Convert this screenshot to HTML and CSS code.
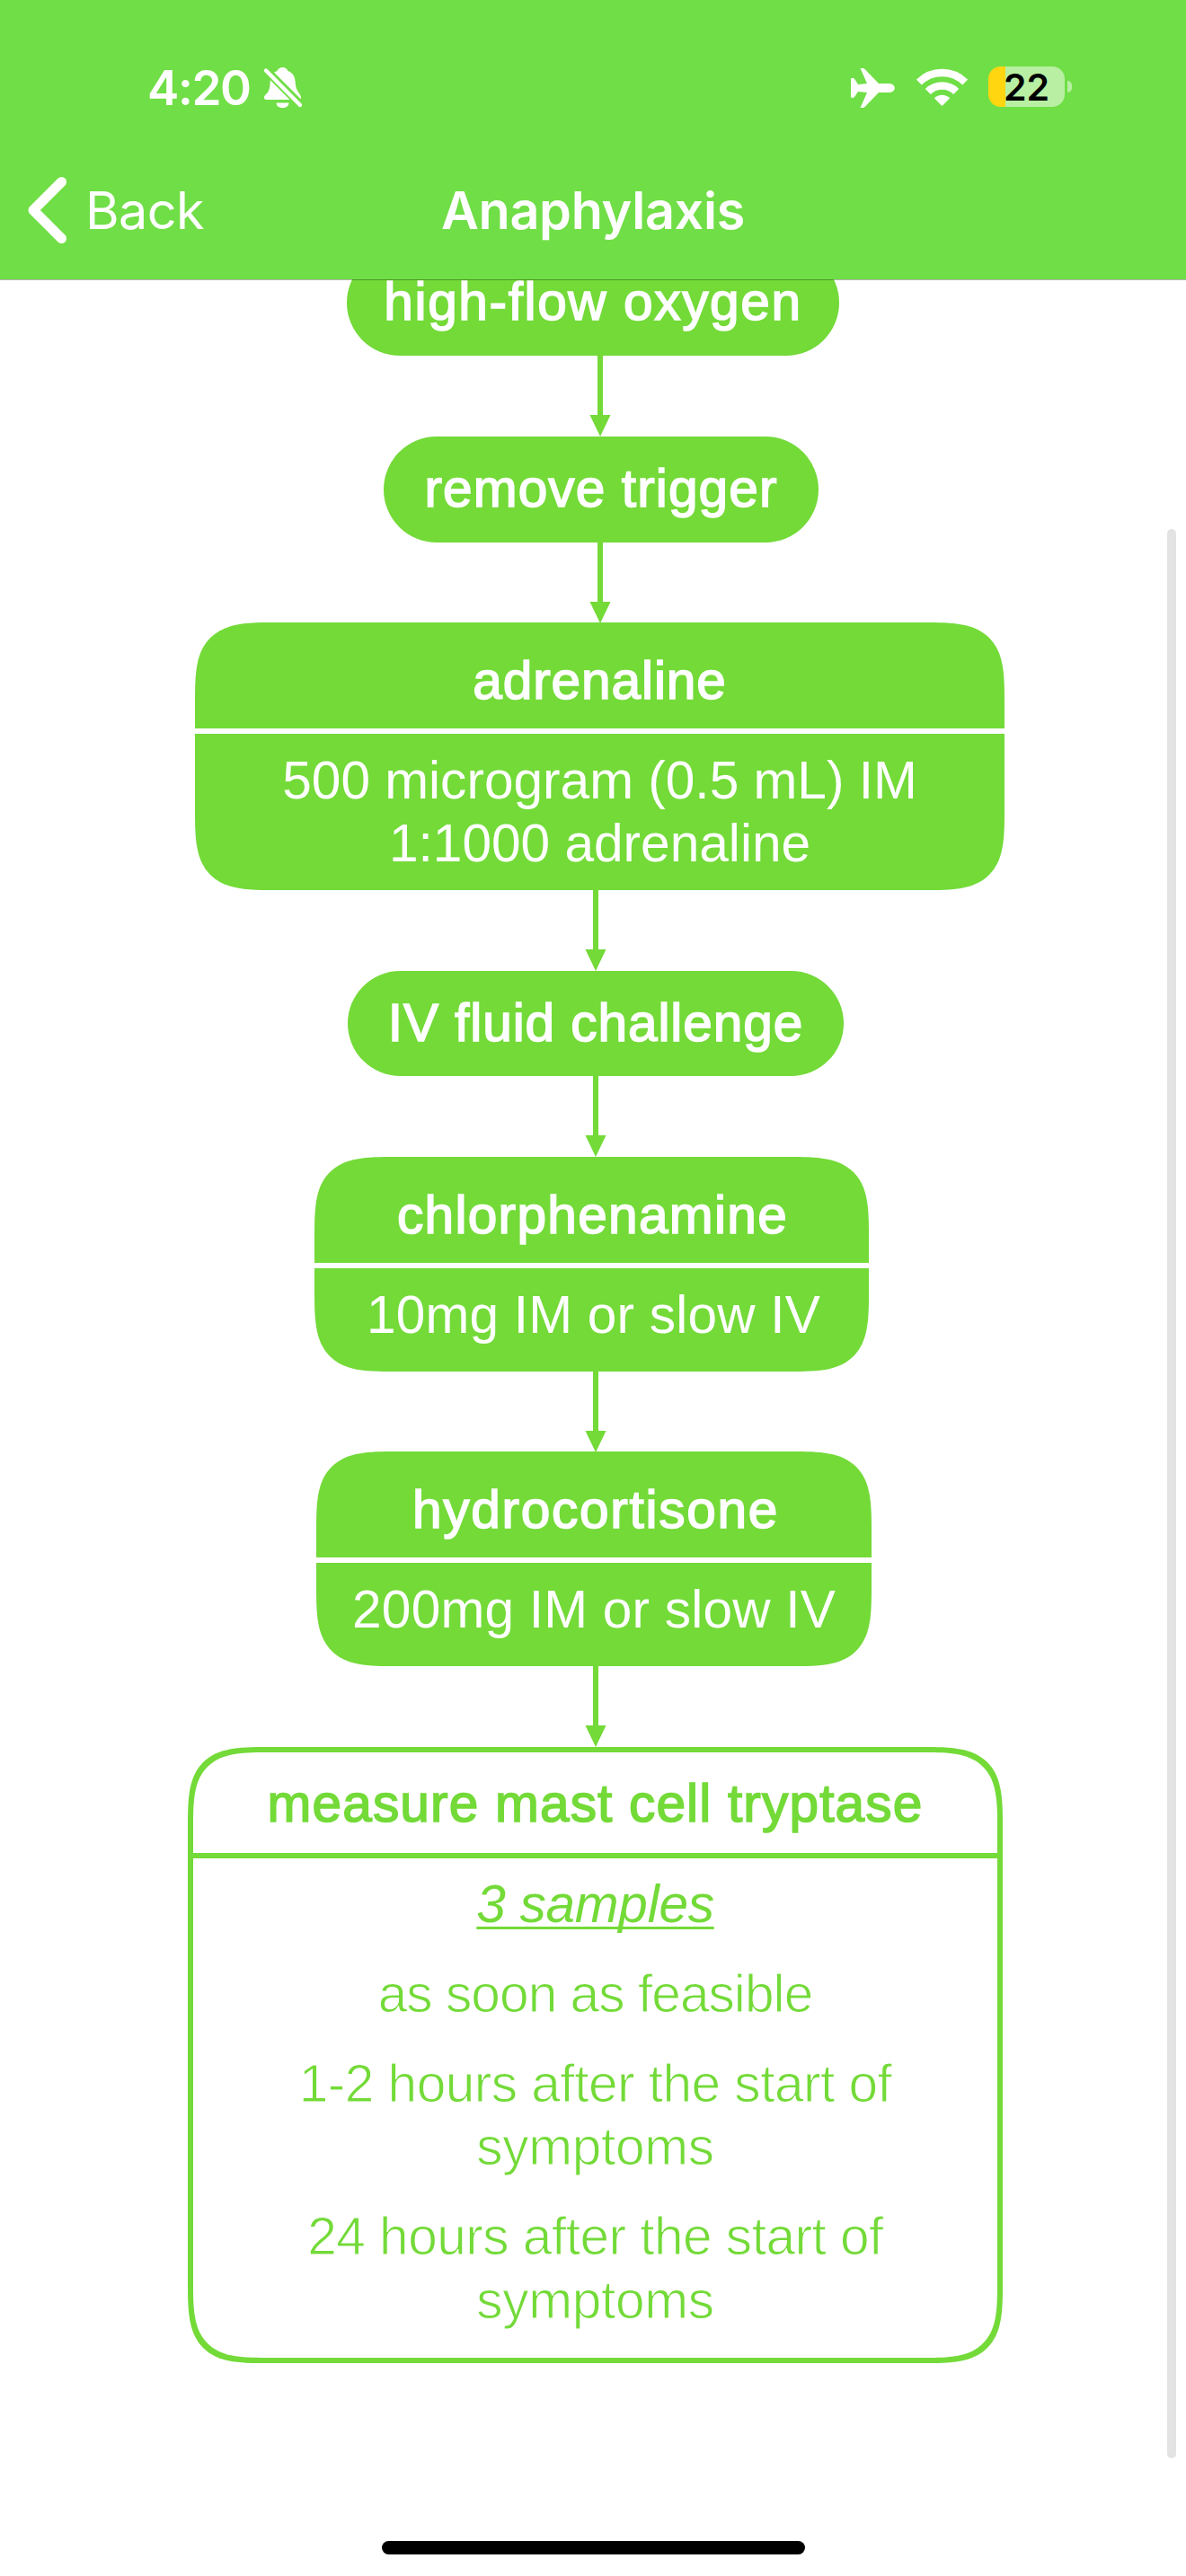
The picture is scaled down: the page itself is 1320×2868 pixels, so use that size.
FILE: index.html
```
<!DOCTYPE html>
<html lang="en">
<head>
<meta charset="utf-8">
<title>Anaphylaxis</title>
<link rel="stylesheet" href="styles.css">
</head>
<body>
<svg class="defs" width="0" height="0" aria-hidden="true">
  <symbol id="arrow" viewBox="0 0 24 90"><path d="M9 0h6v66h8.500L12 90 .5 66H9z"/></symbol>
</svg>
<div class="screen">
  <header class="top">
    <div class="status">
      <span class="time">4:20</span>
      <svg class="bell" viewBox="0 0 42 46" aria-hidden="true">
        <path d="M0 33.500C0 30 5.500 30 6.500 20C6.800 9 9.500 6 14.500 4C16.500-1.300 24.500-1.300 26.500 4C32 6 34.500 10 34.800 18C35.500 28 41 29 41 33.500Q41 36 38 36H3Q0 36 0 33.500z"/>
        <path d="M13.500 39.500h14c0 7.500-14 7.500-14 0z"/>
        <path class="cut" d="M-2-1 41 42"/>
        <path class="slash" d="M2 3.500 40 42"/>
      </svg>
      <svg class="plane" viewBox="0 0 49 44" aria-hidden="true">
        <path d="M10.500 0h3q1 0 2 1L31 17h11c9 0 9 10 0 10H31L15.500 43q-1 1-2 1h-3L18 27 8 26 4 32q-.5.7-1.500.7H0V11h2.500q1 0 1.500.7L8 18l10-1z"/>
      </svg>
      <svg class="wifi" viewBox="0 0 57 42" aria-hidden="true">
        <path class="arc" d="M2.800 15.600a36.500 36.500 0 0 1 51.400 0M12.800 26a22.500 22.500 0 0 1 31.400 0"/>
        <path d="M19.800 33.200a12.500 12.500 0 0 1 17.400 0L28.500 42z"/>
      </svg>
      <div class="battery"><span>22</span></div>
      <i class="nub"></i>
    </div>
    <div class="nav">
      <svg class="chevron" viewBox="0 0 43 74" aria-hidden="true"><path d="M37.500 5.500 6 37 37.500 68.500"/></svg>
      <span class="back">Back</span>
      <h1>Anaphylaxis</h1>
    </div>
  </header>
  <main class="chart">
    <div class="pill oxygen">high-flow oxygen</div>
    <svg class="arrow shift"><use href="#arrow"/></svg>
    <div class="pill trigger">remove trigger</div>
    <svg class="arrow shift"><use href="#arrow"/></svg>
    <section class="card adrenaline">
      <h2>adrenaline</h2>
      <div class="body"><p>500 microgram (0.5 mL) IM<br>1:1000 adrenaline</p></div>
    </section>
    <svg class="arrow"><use href="#arrow"/></svg>
    <div class="pill fluid">IV fluid challenge</div>
    <svg class="arrow"><use href="#arrow"/></svg>
    <section class="card chlor">
      <h2>chlorphenamine</h2>
      <div class="body"><p>10mg IM or slow IV</p></div>
    </section>
    <svg class="arrow"><use href="#arrow"/></svg>
    <section class="card hydro">
      <h2>hydrocortisone</h2>
      <div class="body"><p>200mg IM or slow IV</p></div>
    </section>
    <svg class="arrow"><use href="#arrow"/></svg>
    <section class="card outline">
      <h2>measure mast cell tryptase</h2>
      <div class="body">
        <p class="samples">3 samples</p>
        <p class="soon">as soon as feasible</p>
        <p>1-2 hours after the start of <span class="word">symptoms</span></p>
        <p>24 hours after the start of <span class="word">symptoms</span></p>
      </div>
    </section>
  </main>
  <div class="scrollbar"></div>
  <div class="home"></div>
</div>
</body>
</html>
```
FILE: styles.css
```
* { box-sizing: border-box; margin: 0; padding: 0; }
body { background: #fff; }
.defs { position: absolute; }

.screen {
  --green: #73da38;
  --bar: #70de46;
  position: relative;
  width: 1320px;
  height: 2868px;
  overflow: hidden;
  background: #fff;
  font-family: "Liberation Sans", Arial, sans-serif;
}

.top {
  position: relative;
  z-index: 1;
  height: 311px;
  background: var(--bar);
  color: #fff;
  font-family: Inter, "Liberation Sans", sans-serif;
}
.top::after {
  content: "";
  position: absolute;
  left: 0;
  right: 0;
  top: 311px;
  height: 1px;
  background: rgba(0, 0, 0, .3);
}
.top svg { display: block; fill: #fff; }

.status {
  display: flex;
  align-items: center;
  height: 193px;
  padding-left: 164px;
}
.time {
  width: 130px;
  font-size: 53px;
  font-weight: 600;
  letter-spacing: -1.4px;
  line-height: 64px;
  padding-top: 2px;
}
.bell { width: 42px; height: 46px; margin-top: 2px; overflow: visible; }
.bell .cut { fill: none; stroke: var(--bar); stroke-width: 9; }
.bell .slash { fill: none; stroke: #fff; stroke-width: 4.4; stroke-linecap: round; }
.plane { width: 49px; height: 44px; margin: 2px 0 0 611px; }
.wifi { width: 57px; height: 42px; margin-left: 24px; }
.wifi .arc { fill: none; stroke: #fff; stroke-width: 8.5; }
.battery {
  width: 85px;
  height: 45px;
  margin-left: 23px;
  border-radius: 14px;
  background: linear-gradient(90deg, #ffd60f 19px, #b8efa2 19px);
  color: #000;
  text-align: center;
  font-size: 41px;
  font-weight: 600;
  line-height: 46px;
}
.nub {
  width: 5px;
  height: 13px;
  margin-left: 3px;
  border-radius: 0 5px 5px 0;
  background: #b8efa2;
}

.nav {
  position: relative;
  display: flex;
  align-items: center;
  height: 82px;
  padding-left: 31px;
}
.chevron { width: 43px; height: 74px; }
.chevron path { fill: none; stroke: #fff; stroke-width: 11; stroke-linecap: round; stroke-linejoin: round; }
.back { margin-left: 21px; font-size: 57.5px; letter-spacing: -.6px; }
.nav h1 {
  position: absolute;
  left: 0;
  right: 0;
  text-align: center;
  font-size: 57.5px;
  font-weight: 600;
  letter-spacing: -.34px;
}

.chart {
  display: flex;
  flex-direction: column;
  align-items: flex-start;
  margin-top: -33px;
  font-size: 58.6px;
  color: #fff;
}
.arrow {
  display: block;
  flex: none;
  width: 24px;
  height: 90px;
  margin-left: 651px;
  fill: var(--green);
}
.arrow.shift { margin-left: 656px; }

.pill {
  height: 118px;
  border-radius: 59px;
  background: var(--green);
  text-align: center;
  line-height: 115px;
  white-space: nowrap;
  -webkit-text-stroke: 1.6px currentColor;
}
.oxygen { width: 548px; margin-left: 386px; letter-spacing: 1.6px; }
.trigger { width: 484px; margin-left: 427px; letter-spacing: 1.1px; }
.fluid { width: 552px; margin-left: 387px; letter-spacing: .9px; height: 117px; }

.card {
  overflow: hidden;
  border-radius: 89px;
  corner-shape: superellipse(1.7);
  background: var(--green);
  text-align: center;
}
.card h2 {
  height: 118px;
  padding-top: 13px;
  font-size: inherit;
  font-weight: 400;
  line-height: 104px;
  -webkit-text-stroke: 1.6px currentColor;
}
.body {
  padding-top: 17px;
  border-top: 6px solid #fff;
  line-height: 70.4px;
}
.adrenaline { width: 901px; height: 298px; margin: -1px 0 0 217px; letter-spacing: 0; }
.adrenaline h2 { letter-spacing: .9px; }
.chlor { width: 617px; height: 239px; margin-left: 350px; letter-spacing: .2px; }
.chlor h2 { padding-left: 2px; letter-spacing: 1.3px; }
.chlor p { padding-left: 4px; }
.hydro { width: 618px; height: 239px; margin: -1px 0 0 352px; letter-spacing: .2px; }
.hydro h2 { padding-left: 4px; letter-spacing: 1.7px; }

.outline {
  width: 907px;
  height: 686px;
  margin-left: 209px;
  border: 6px solid var(--green);
  background: #fff;
  color: var(--green);
}
.outline h2 { height: 112px; padding-top: 5px; letter-spacing: 1.15px; }
.outline .body { padding-top: 16px; border-color: var(--green); }
.outline p {
  width: 700px;
  margin: 0 auto 29.5px;
  letter-spacing: -.52px;
  -webkit-text-stroke: 1px #fff;
}
.outline .samples {
  font-style: italic;
  text-decoration: underline 3px;
  text-decoration-skip-ink: none;
  text-underline-offset: 5px;
  letter-spacing: -.3px;
  -webkit-text-stroke: 0;
}
.outline .soon { letter-spacing: -.95px; }
.word { letter-spacing: -.3px; }

.scrollbar {
  position: absolute;
  left: 1299px;
  top: 589px;
  width: 10px;
  height: 2148px;
  border-radius: 5px;
  background: #e3e3e3;
}
.home {
  position: absolute;
  left: 425px;
  top: 2829px;
  width: 471px;
  height: 15px;
  border-radius: 8px;
  background: #000;
}
```
